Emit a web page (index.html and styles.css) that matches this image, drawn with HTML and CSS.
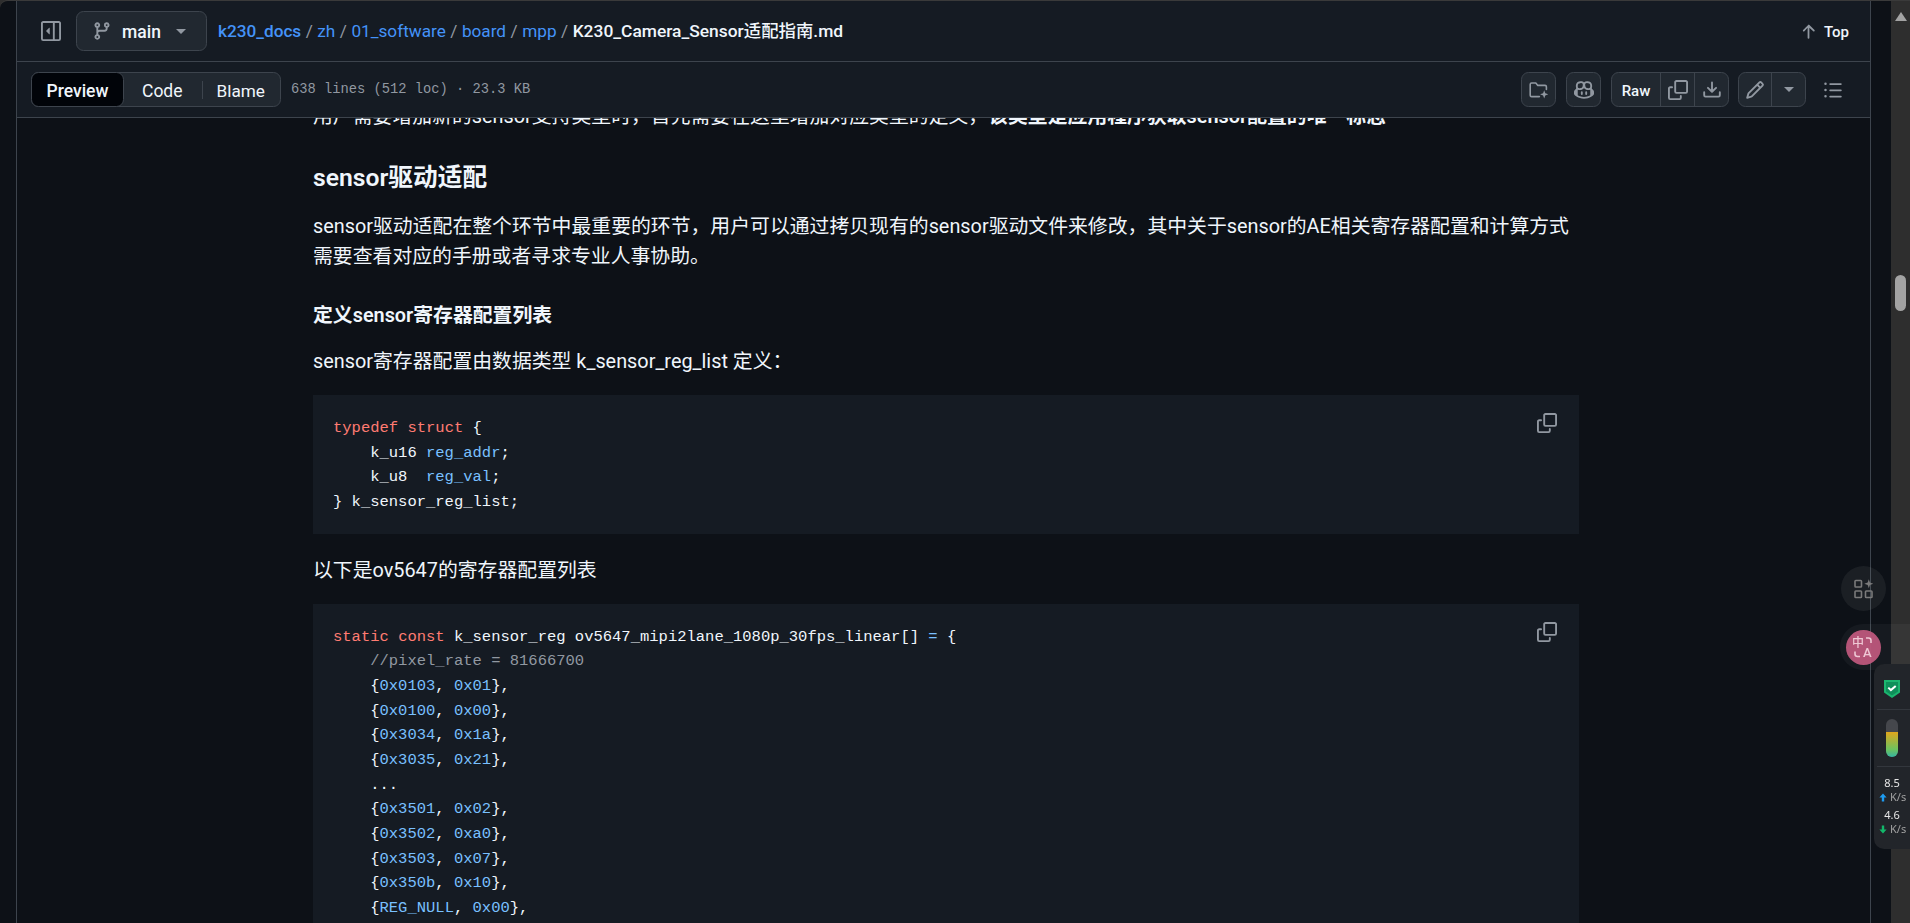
FILE: index.html
```html
<!DOCTYPE html>
<html lang="zh">
<head>
<meta charset="utf-8">
<title>K230_Camera_Sensor适配指南.md</title>
<link rel="stylesheet" href="styles.css">
</head>
<body>
<div class="window">
  <div class="gutter-left"></div>
  <main class="panel">
    <header class="sticky">
      <div class="row row-top">
        <svg class="ico sidebar" viewBox="0 0 16 16"><path d="m4.177 7.823 2.396-2.396A.25.25 0 0 1 7 5.604v4.792a.25.25 0 0 1-.427.177L4.177 8.177a.25.25 0 0 1 0-.354Z"/><path d="M0 1.75C0 .784.784 0 1.75 0h12.5C15.216 0 16 .784 16 1.75v12.5A1.75 1.75 0 0 1 14.25 16H1.75A1.75 1.75 0 0 1 0 14.25Zm1.75-.25a.25.25 0 0 0-.25.25v12.5c0 .138.112.25.25.25H9.5v-13Zm12.5 13a.25.25 0 0 0 .25-.25V1.75a.25.25 0 0 0-.25-.25H11v13Z"/></svg>
        <button class="branch">
          <svg class="ico" viewBox="0 0 16 16"><path d="M9.5 3.25a2.25 2.25 0 1 1 3 2.122V6A2.5 2.5 0 0 1 10 8.5H6a1 1 0 0 0-1 1v1.128a2.251 2.251 0 1 1-1.5 0V5.372a2.25 2.25 0 1 1 1.5 0v1.836A2.493 2.493 0 0 1 6 7h4a1 1 0 0 0 1-1v-.628A2.25 2.25 0 0 1 9.5 3.25Zm-6 0a.75.75 0 1 0 1.5 0 .75.75 0 0 0-1.5 0Zm8.25-.75a.75.75 0 1 0 0 1.5.75.75 0 0 0 0-1.5ZM4.25 12a.75.75 0 1 0 0 1.5.75.75 0 0 0 0-1.5Z"/></svg>
          <span class="branch-name">main</span>
          <span class="caret"></span>
        </button>
        <nav class="crumbs"><a class="crumb strong">k230_docs</a><i>/</i><a class="crumb">zh</a><i>/</i><a class="crumb">01_software</a><i>/</i><a class="crumb">board</a><i>/</i><a class="crumb">mpp</a><i>/</i><b class="file">K230_Camera_Sensor适配指南.md</b></nav>
        <div class="spacer"></div>
        <a class="top-link"><svg class="ico" viewBox="0 0 16 16"><path d="M3.47 7.78a.75.75 0 0 1 0-1.06l4.25-4.25a.75.75 0 0 1 1.06 0l4.25 4.25a.751.751 0 0 1-.018 1.042.751.751 0 0 1-1.042.018L8.75 4.81v8.44a.75.75 0 0 1-1.5 0V4.81L4.53 7.78a.75.75 0 0 1-1.06 0Z"/></svg><span class="top-text">Top</span></a>
      </div>
      <div class="row row-tools">
        <div class="segment">
          <span class="seg seg-on">Preview</span>
          <span class="seg seg-code">Code</span>
          <span class="seg-sep"></span>
          <span class="seg seg-blame">Blame</span>
        </div>
        <span class="meta">638 lines (512 loc) · 23.3 KB</span>
        <div class="spacer"></div>
        <button class="icon-btn"><svg class="ico" viewBox="0 0 20 20"><path class="stroke" d="M1.2 15.2V4.4c0-.8.6-1.4 1.4-1.4h4.2l2 2.4h7.2c.8 0 1.4.6 1.4 1.4v2.6M10.4 16.6H2.6c-.8 0-1.4-.6-1.4-1.4"/><path d="M15.2 10.2l1.1 3 3 1.1-3 1.1-1.1 3-1.1-3-3-1.1 3-1.1z"/></svg></button>
        <button class="icon-btn"><svg class="ico" viewBox="0 0 16 16"><path d="M7.998 15.035c-4.562 0-7.873-2.914-7.998-3.749V9.338c.085-.628.677-1.686 1.588-2.065.013-.07.024-.143.036-.218.029-.183.06-.384.126-.612-.201-.508-.254-1.084-.254-1.656 0-.87.128-1.769.693-2.484.579-.733 1.494-1.124 2.724-1.261 1.206-.134 2.262.034 2.944.765.05.053.096.108.139.165.044-.057.094-.112.143-.165.682-.731 1.738-.899 2.944-.765 1.23.137 2.145.528 2.724 1.261.566.715.693 1.614.693 2.484 0 .572-.053 1.148-.254 1.656.066.228.098.429.126.612.012.076.024.148.037.218.924.385 1.522 1.471 1.591 2.095v1.872c0 .766-3.351 3.795-8.002 3.795Zm0-1.485c2.28 0 4.584-1.11 5.002-1.433V7.862l-.023-.116c-.49.21-1.075.291-1.727.291-1.146 0-2.059-.327-2.71-.991A3.222 3.222 0 0 1 8 6.303a3.24 3.24 0 0 1-.544.743c-.65.664-1.563.991-2.71.991-.652 0-1.236-.081-1.727-.291l-.023.116v4.255c.419.323 2.722 1.433 5.002 1.433ZM6.762 2.83c-.193-.206-.637-.413-1.682-.297-1.019.113-1.479.404-1.713.7-.247.312-.369.789-.369 1.554 0 .793.129 1.171.308 1.371.162.181.519.379 1.442.379.853 0 1.339-.235 1.638-.54.315-.322.527-.827.617-1.553.117-.935-.037-1.395-.241-1.614Zm4.155-.297c-1.044-.116-1.488.091-1.681.297-.204.219-.359.679-.242 1.614.091.726.303 1.231.618 1.553.299.305.784.54 1.638.54.922 0 1.28-.198 1.442-.379.179-.2.308-.578.308-1.371 0-.765-.123-1.242-.37-1.554-.233-.296-.693-.587-1.713-.7Z"/><path d="M6.25 9.037a.75.75 0 0 1 .75.75v1.501a.75.75 0 0 1-1.5 0V9.787a.75.75 0 0 1 .75-.75Zm4.25.75v1.501a.75.75 0 0 1-1.5 0V9.787a.75.75 0 0 1 1.5 0Z"/></svg></button>
        <div class="group">
          <span class="group-item raw">Raw</span>
          <span class="group-item"><svg class="ico" viewBox="0 0 16 16"><path d="M0 6.75C0 5.784.784 5 1.75 5h1.5a.75.75 0 0 1 0 1.5h-1.5a.25.25 0 0 0-.25.25v7.5c0 .138.112.25.25.25h7.5a.25.25 0 0 0 .25-.25v-1.5a.75.75 0 0 1 1.5 0v1.5A1.75 1.75 0 0 1 9.25 16h-7.5A1.75 1.75 0 0 1 0 14.25Z"/><path d="M5 1.75C5 .784 5.784 0 6.75 0h7.5C15.216 0 16 .784 16 1.75v7.5A1.75 1.75 0 0 1 14.25 11h-7.5A1.75 1.75 0 0 1 5 9.25Zm1.75-.25a.25.25 0 0 0-.25.25v7.5c0 .138.112.25.25.25h7.5a.25.25 0 0 0 .25-.25v-7.5a.25.25 0 0 0-.25-.25Z"/></svg></span>
          <span class="group-item"><svg class="ico" viewBox="0 0 16 16"><path d="M2.75 14A1.75 1.75 0 0 1 1 12.25v-2.5a.75.75 0 0 1 1.5 0v2.5c0 .138.112.25.25.25h10.5a.25.25 0 0 0 .25-.25v-2.5a.75.75 0 0 1 1.5 0v2.5A1.75 1.75 0 0 1 13.25 14Z"/><path d="M7.25 7.689V2a.75.75 0 0 1 1.5 0v5.689l1.97-1.969a.749.749 0 1 1 1.06 1.06l-3.25 3.25a.749.749 0 0 1-1.06 0L4.22 6.78a.749.749 0 1 1 1.06-1.06l1.97 1.969Z"/></svg></span>
        </div>
        <div class="group group-edit">
          <span class="group-item pen"><svg class="ico" viewBox="0 0 16 16"><path d="M11.013 1.427a1.75 1.75 0 0 1 2.474 0l1.086 1.086a1.75 1.75 0 0 1 0 2.474l-8.61 8.61c-.21.21-.47.364-.756.445l-3.251.93a.75.75 0 0 1-.927-.928l.929-3.25c.081-.286.235-.547.445-.758l8.61-8.61Zm.176 4.823L9.75 4.81l-6.286 6.287a.253.253 0 0 0-.064.108l-.558 1.953 1.953-.558a.253.253 0 0 0 .108-.064Zm1.238-3.763a.25.25 0 0 0-.354 0L10.811 3.75l1.439 1.44 1.263-1.263a.25.25 0 0 0 0-.354Z"/></svg></span>
          <span class="group-item drop"><span class="caret"></span></span>
        </div>
        <svg class="ico outline" viewBox="0 0 16 16"><path d="M5.75 2.5h8.5a.75.75 0 0 1 0 1.5h-8.5a.75.75 0 0 1 0-1.5Zm0 5h8.5a.75.75 0 0 1 0 1.5h-8.5a.75.75 0 0 1 0-1.5Zm0 5h8.5a.75.75 0 0 1 0 1.5h-8.5a.75.75 0 0 1 0-1.5ZM2 14a1 1 0 1 1 0-2 1 1 0 0 1 0 2Zm1-6a1 1 0 1 1-2 0 1 1 0 0 1 2 0ZM2 4a1 1 0 1 1 0-2 1 1 0 0 1 0 2Z"/></svg>
      </div>
    </header>
    <article class="markdown">
      <p>用户需要增加新的sensor支持类型时，首先需要在这里增加对应类型的定义，<strong>该类型是应用程序获取sensor配置的唯一标志</strong></p>
      <h2>sensor驱动适配</h2>
      <p>sensor驱动适配在整个环节中最重要的环节，用户可以通过拷贝现有的sensor驱动文件来修改，其中关于sensor的AE相关寄存器配置和计算方式需要查看对应的手册或者寻求专业人事协助。</p>
      <h3>定义sensor寄存器配置列表</h3>
      <p>sensor寄存器配置由数据类型 k_sensor_reg_list 定义：</p>
      <div class="code">
        <svg class="ico copy" viewBox="0 0 16 16"><path d="M0 6.75C0 5.784.784 5 1.75 5h1.5a.75.75 0 0 1 0 1.5h-1.5a.25.25 0 0 0-.25.25v7.5c0 .138.112.25.25.25h7.5a.25.25 0 0 0 .25-.25v-1.5a.75.75 0 0 1 1.5 0v1.5A1.75 1.75 0 0 1 9.25 16h-7.5A1.75 1.75 0 0 1 0 14.25Z"/><path d="M5 1.75C5 .784 5.784 0 6.75 0h7.5C15.216 0 16 .784 16 1.75v7.5A1.75 1.75 0 0 1 14.25 11h-7.5A1.75 1.75 0 0 1 5 9.25Zm1.75-.25a.25.25 0 0 0-.25.25v7.5c0 .138.112.25.25.25h7.5a.25.25 0 0 0 .25-.25v-7.5a.25.25 0 0 0-.25-.25Z"/></svg>
<pre><span class="k">typedef</span> <span class="k">struct</span> {
    k_u16 <span class="c">reg_addr</span>;
    k_u8  <span class="c">reg_val</span>;
} k_sensor_reg_list;</pre>
      </div>
      <p>以下是ov5647的寄存器配置列表</p>
      <div class="code">
        <svg class="ico copy" viewBox="0 0 16 16"><path d="M0 6.75C0 5.784.784 5 1.75 5h1.5a.75.75 0 0 1 0 1.5h-1.5a.25.25 0 0 0-.25.25v7.5c0 .138.112.25.25.25h7.5a.25.25 0 0 0 .25-.25v-1.5a.75.75 0 0 1 1.5 0v1.5A1.75 1.75 0 0 1 9.25 16h-7.5A1.75 1.75 0 0 1 0 14.25Z"/><path d="M5 1.75C5 .784 5.784 0 6.75 0h7.5C15.216 0 16 .784 16 1.75v7.5A1.75 1.75 0 0 1 14.25 11h-7.5A1.75 1.75 0 0 1 5 9.25Zm1.75-.25a.25.25 0 0 0-.25.25v7.5c0 .138.112.25.25.25h7.5a.25.25 0 0 0 .25-.25v-7.5a.25.25 0 0 0-.25-.25Z"/></svg>
<pre><span class="k">static</span> <span class="k">const</span> k_sensor_reg ov5647_mipi2lane_1080p_30fps_linear[] <span class="c">=</span> {
    <span class="m">//pixel_rate = 81666700</span>
    {<span class="c">0x0103</span>, <span class="c">0x01</span>},
    {<span class="c">0x0100</span>, <span class="c">0x00</span>},
    {<span class="c">0x3034</span>, <span class="c">0x1a</span>},
    {<span class="c">0x3035</span>, <span class="c">0x21</span>},
    ...
    {<span class="c">0x3501</span>, <span class="c">0x02</span>},
    {<span class="c">0x3502</span>, <span class="c">0xa0</span>},
    {<span class="c">0x3503</span>, <span class="c">0x07</span>},
    {<span class="c">0x350b</span>, <span class="c">0x10</span>},
    {<span class="c">REG_NULL</span>, <span class="c">0x00</span>},
};</pre>
      </div>
    </article>
  </main>
  <div class="gutter-right"></div>
  <div class="scrollbar">
    <span class="sb-arrow"></span>
    <span class="sb-thumb"></span>
  </div>
</div>

<div class="float float-grid">
  <svg viewBox="0 0 20 20" class="grid-ico"><rect x="1" y="1.5" width="6.5" height="6.5" rx=".8"/><rect x="1" y="12" width="6.5" height="6.5" rx=".8"/><rect x="11.5" y="12" width="6.5" height="6.5" rx=".8"/><path class="fill" d="M14.8.2l1.1 3.3 3.4 1.2-3.4 1.2-1.1 3.3-1.1-3.3-3.4-1.2 3.4-1.2z"/></svg>
</div>
<div class="float-trans">
  <div class="trans-dot">
    <span class="tz">中</span><span class="ta">A</span>
    <svg viewBox="0 0 35 35" class="trans-arcs"><path d="M20 8h2.5c1.6 0 2.5 1 2.5 2.5V13M9 21.5v2.5c0 1.5 1 2.5 2.5 2.5H14"/></svg>
  </div>
</div>
<aside class="net">
  <div class="net-sec net-shield">
    <svg viewBox="0 0 16 18" class="shield"><path class="sh-a" d="M0 0h16v12.6L8 18 0 12.6z"/><path class="sh-b" d="M2 2h12v9.6L8 15.6 2 11.6z"/><path class="sh-c" d="M4.3 7.6l2.6 2.5 4.8-4.2"/></svg>
  </div>
  <div class="net-sec net-meter"><div class="meter"><div class="meter-fill"></div></div></div>
  <div class="net-rates">
    <div class="rate-v">8.5</div>
    <div class="rate-u"><svg viewBox="0 0 10 10" class="up"><path d="M5 0l4.5 5H6.5v5h-3V5H.5z"/></svg><span>K/s</span></div>
    <div class="rate-v rate-gap">4.6</div>
    <div class="rate-u"><svg viewBox="0 0 10 10" class="down"><path d="M5 10L.5 5h3V0h3v5h3z"/></svg><span>K/s</span></div>
  </div>
</aside>
</body>
</html>
```
FILE: styles.css
```css
* { box-sizing: border-box; }
html, body { margin: 0; height: 100%; overflow: hidden; background: #2e2e2e; }
body {
  color: #f0f6fc;
  font-family: Roboto, "Noto Sans CJK SC", sans-serif;
  font-size: 20px;
}
button { font: inherit; color: inherit; padding: 0; }
.ico { width: 20px; height: 20px; fill: #9198a1; flex: none; display: block; }
.stroke { fill: none; stroke: #9198a1; stroke-width: 1.6; stroke-linecap: round; stroke-linejoin: round; }

.window { display: flex; height: 923px; border-top: 1px solid #3a3a3a; border-top-left-radius: 8px; overflow: hidden; }
.gutter-left { width: 16px; flex: none; background: #0d1117; }
.panel {
  width: 1855px; flex: none;
  border-left: 1px solid #3d444d; border-right: 1px solid #3d444d;
  background: #0d1117; overflow: hidden;
}
.gutter-right { width: 20px; flex: none; background: #0d1117; }
.scrollbar {
  width: 19px; flex: none; background: #2e2e2e;
  display: flex; flex-direction: column; align-items: center;
  padding-top: 11px;
}
.sb-arrow { width: 0; height: 0; border-left: 6px solid transparent; border-right: 6px solid transparent; border-bottom: 9px solid #a3a3a3; }
.sb-thumb { width: 11px; height: 36px; border-radius: 6px; background: #a3a3a3; margin-top: 254px; }

.sticky { position: relative; z-index: 2; background: #151b23; }
.row { display: flex; align-items: center; border-bottom: 1px solid #3d444d; }
.row-top { height: 61px; padding: 0 21px 0 24px; }
.row-tools { height: 56px; padding: 0 27px 0 14px; }
.spacer { flex: 1; }

.branch {
  display: flex; align-items: center; width: 131px; height: 40px; margin-left: 15px;
  background: #212830; border: 1px solid #3d444d; border-radius: 7.5px; padding-left: 15px;
}
.branch-name { font-size: 17.5px; font-weight: 500; margin-left: 10px; padding-top: 2px; }
.caret { width: 0; height: 0; border-left: 5px solid transparent; border-right: 5px solid transparent; border-top: 5px solid #9198a1; display: block; }
.branch .caret { margin-left: 15px; }
.crumbs { margin-left: 11px; font-size: 17.2px; line-height: 24px; display: flex; align-items: baseline; white-space: nowrap; }
.crumbs i { font-style: normal; color: #9198a1; margin: 0 4.5px; }
.crumb { color: #4493f8; }
.crumb.strong { font-weight: 500; }
.file { font-weight: 500; font-size: 17.4px; color: #f0f6fc; }
.top-link { display: flex; align-items: center; font-size: 15px; font-weight: 500; gap: 6px; }
.top-link .ico { width: 19px; height: 19px; }
.top-text { padding-top: 2px; }

.segment {
  display: flex; align-items: center; width: 250px; height: 35px;
  background: #212830; border: 1px solid #3d444d; border-radius: 7.5px; font-size: 17.5px;
}
.seg { padding-top: 2px; }
.seg-on {
  width: 93px; height: 35px; margin: 0 0 0 -1px; background: #010409; border: 1px solid #3d444d;
  border-radius: 7.5px; font-weight: 500; display: flex; align-items: center; justify-content: center;
}
.seg-code { margin-left: 18px; }
.seg-sep { width: 1px; height: 18px; background: #3d444d; margin-left: 19px; }
.seg-blame { margin-left: 14px; font-size: 17.2px; }
.meta { font-family: "Liberation Mono", monospace; font-size: 13.75px; color: #9198a1; margin-left: 10px; }

.icon-btn, .group {
  height: 35px; background: #212830; border: 1px solid #3d444d; border-radius: 7.5px;
  display: flex; align-items: center; justify-content: center;
}
.icon-btn { width: 35px; margin-left: 10px; }
.group { margin-left: 10px; }
.group-edit { margin-left: 9px; }
.group-item { height: 33px; width: 34px; display: flex; align-items: center; justify-content: center; border-left: 1px solid #3d444d; }
.group-item:first-child { border-left: 0; }
.raw { width: 48px; font-size: 15px; font-weight: 500; padding-top: 2px; }
.pen { width: 32px; }
.outline { margin-left: 17px; }

.markdown { margin-top: -17px; padding-left: 296px; width: 1562px; }
.markdown p { margin: 0 0 18px; padding-top: 1px; line-height: 30px; font-size: 19.85px; }
.markdown h2 { font-size: 24.7px; line-height: 31px; font-weight: 600; margin: 30px 0 18px; }
.markdown h3 { font-size: 19.85px; line-height: 25px; font-weight: 600; margin: 31px 0 18px; }
.markdown strong { font-weight: 600; }
.code { position: relative; background: #151b23; padding: 21px 20px 19px; margin-bottom: 21px; }
.code pre { margin: 0; font-family: "Liberation Mono", monospace; font-size: 15.5px; line-height: 24.65px; color: #f0f6fc; }
.k { color: #ff7b72; }
.c { color: #79c0ff; }
.m { color: #9198a1; }
.copy { position: absolute; top: 18px; right: 22px; }

.float { position: fixed; left: 1841px; top: 566px; width: 45px; height: 45px; border-radius: 50%; background: rgba(255, 255, 255, .06); display: flex; align-items: center; justify-content: center; }
.grid-ico { width: 20px; height: 20px; fill: none; stroke: #7a7a7a; stroke-width: 1.6; }
.grid-ico .fill { fill: #7a7a7a; stroke: none; }
.float-trans { position: fixed; left: 1840px; top: 624px; width: 70px; height: 46px; border-radius: 23px 0 0 23px; background: rgba(255, 255, 255, .04); display: flex; align-items: center; padding-left: 6px; }
.trans-dot { position: relative; width: 35px; height: 35px; border-radius: 50%; background: rgba(190, 88, 124, .95); color: #eec7d4; }
.tz { position: absolute; left: 6px; top: 7px; font-size: 12px; line-height: 13px; font-weight: 500; }
.ta { position: absolute; left: 17px; top: 16px; font-size: 13px; line-height: 13px; font-weight: 500; }
.trans-arcs { position: absolute; left: 0; top: 0; width: 35px; height: 35px; fill: none; stroke: #eec7d4; stroke-width: 1.6; }

.net { position: fixed; left: 1874px; top: 664px; width: 36px; height: 185px; background: #22252a; border-radius: 10px 0 0 10px; display: flex; flex-direction: column; overflow: hidden; }
.net-sec { border-bottom: 1px solid #33373d; display: flex; justify-content: center; margin-left: 3px; padding-right: 3px; }
.net-shield { height: 46px; padding-top: 16px; }
.shield { width: 16px; height: 18px; }
.sh-a { fill: #1bb56f; }
.sh-b { fill: #0f8f5a; }
.sh-c { fill: none; stroke: #fff; stroke-width: 2; }
.net-meter { height: 57px; padding-top: 9px; }
.meter { width: 12px; height: 38px; border-radius: 6px; background: #45474c; overflow: hidden; display: flex; flex-direction: column; justify-content: flex-end; }
.meter-fill { height: 25px; background: linear-gradient(#e0a61c, #6cc25f 70%, #35b5a2); }
.net-rates { padding-top: 9px; font-size: 11px; line-height: 14px; color: #e6e6e6; font-family: "Noto Sans", sans-serif; }
.rate-v { text-align: center; }
.rate-gap { margin-top: 4px; }
.rate-u { display: flex; align-items: center; color: #a0a0a0; padding-left: 5px; gap: 3px; white-space: nowrap; }
.up, .down { width: 8px; height: 9px; flex: none; }
.up { fill: #1e9bf0; }
.down { fill: #12b76a; }
```
